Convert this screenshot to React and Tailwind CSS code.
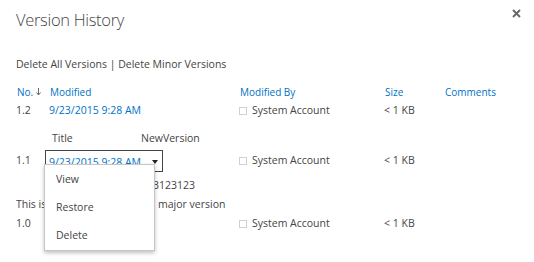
import React from 'react';

const font = { fontFamily: '"Segoe UI", "Open Sans", sans-serif' };

function Check() {
    return <span className="inline-block w-[8px] h-[8px] border border-[#d0d0d0] bg-white mr-[5px]"></span>;
}

function Row({ className, no, modified, by, size }) {
    return (
        <div className={`flex items-center text-[10.5px] text-[#444] ${className}`}>
            <div className="w-[33px]">{no}</div>
            <div className="w-[190px]">{modified}</div>
            <div className="w-[145px] flex items-center">{by}</div>
            <div className="w-[60px]">{size}</div>
        </div>
    );
}

export default function App() {
    return (
        <div className="relative w-[534px] h-[262px] bg-white overflow-hidden pl-[16px]" style={font}>
            <div className="flex items-start justify-between pt-[8px] pr-[13px]">
                <h1 className="text-[16.5px] leading-[24px] font-light tracking-[-0.3px] text-[#444]">Version History</h1>
                <svg width="9" height="9" viewBox="0 0 9 9" className="mt-[1px]">
                    <path d="M1 1 L8 8 M8 1 L1 8" stroke="#666" strokeWidth="1.8" />
                </svg>
            </div>

            <div className="mt-[24px] text-[10.5px] leading-[16px] text-[#444]">
                Delete All Versions | Delete Minor Versions
            </div>

            <div className="mt-[11px] h-[18px] flex items-center text-[10px] text-[#0072c6]">
                <div className="w-[34px] pl-[1px] flex items-center gap-[3px]">
                    No.
                    <svg width="5" height="8" viewBox="0 0 5 8">
                        <path d="M2.5 0 V6 M0.5 4.5 L2.5 7 L4.5 4.5" stroke="#666" strokeWidth="1" fill="none" />
                    </svg>
                </div>
                <div className="w-[190px]">Modified</div>
                <div className="w-[145px]">Modified By</div>
                <div className="w-[60px]">Size</div>
                <div>Comments</div>
            </div>

            <Row
                className="mt-[1px] h-[18px]"
                no="1.2"
                modified={<span className="text-[#0072c6] text-[10.5px]">9/23/2015 9:28 AM</span>}
                by={<><Check />System Account</>}
                size="< 1 KB"
            />

            <div className="mt-[10px] h-[18px] flex items-center text-[10.5px] text-[#444]">
                <div className="w-[36px]"></div>
                <div className="w-[89px]">Title</div>
                <div>NewVersion</div>
            </div>

            <Row
                className="mt-[2px] h-[22px]"
                no="1.1"
                modified={
                    <div className="w-[118px] h-[22px] -ml-[4px] border border-[#444] flex items-center justify-between pl-[3px] pr-[4px] pt-[4px]">
                        <span className="text-[#0072c6] text-[10.5px]">9/23/2015 9:28 AM</span>
                        <svg width="6" height="4" viewBox="0 0 6 4" className="-mt-[3px]">
                            <path d="M0 0 H6 L3 4 Z" fill="#222" />
                        </svg>
                    </div>
                }
                by={<><Check />System Account</>}
                size="< 1 KB"
            />

            <div className="mt-[5px] h-[18px] flex items-center text-[10.5px] text-[#444]">
                <div className="w-[125px]"></div>
                <div>123123123</div>
            </div>

            <div className="mt-[1px] h-[18px] flex items-center text-[10.5px] text-[#444] whitespace-nowrap">
                <span className="inline-block w-[142px] overflow-hidden">This is the first published</span>
                <span>major version</span>
            </div>

            <Row
                className="mt-[1px] h-[18px]"
                no="1.0"
                modified=""
                by={<><Check />System Account</>}
                size="< 1 KB"
            />

            <div className="absolute left-[44px] top-[164px] w-[111px] h-[87px] bg-white border border-[#c6c6c6] shadow-[0_2px_4px_rgba(0,0,0,0.25)] flex flex-col justify-center text-[10.5px] text-[#444]">
                <div className="h-[28px] flex items-center pl-[11px]">View</div>
                <div className="h-[28px] flex items-center pl-[11px]">Restore</div>
                <div className="h-[28px] flex items-center pl-[11px]">Delete</div>
            </div>
        </div>
    );
}
